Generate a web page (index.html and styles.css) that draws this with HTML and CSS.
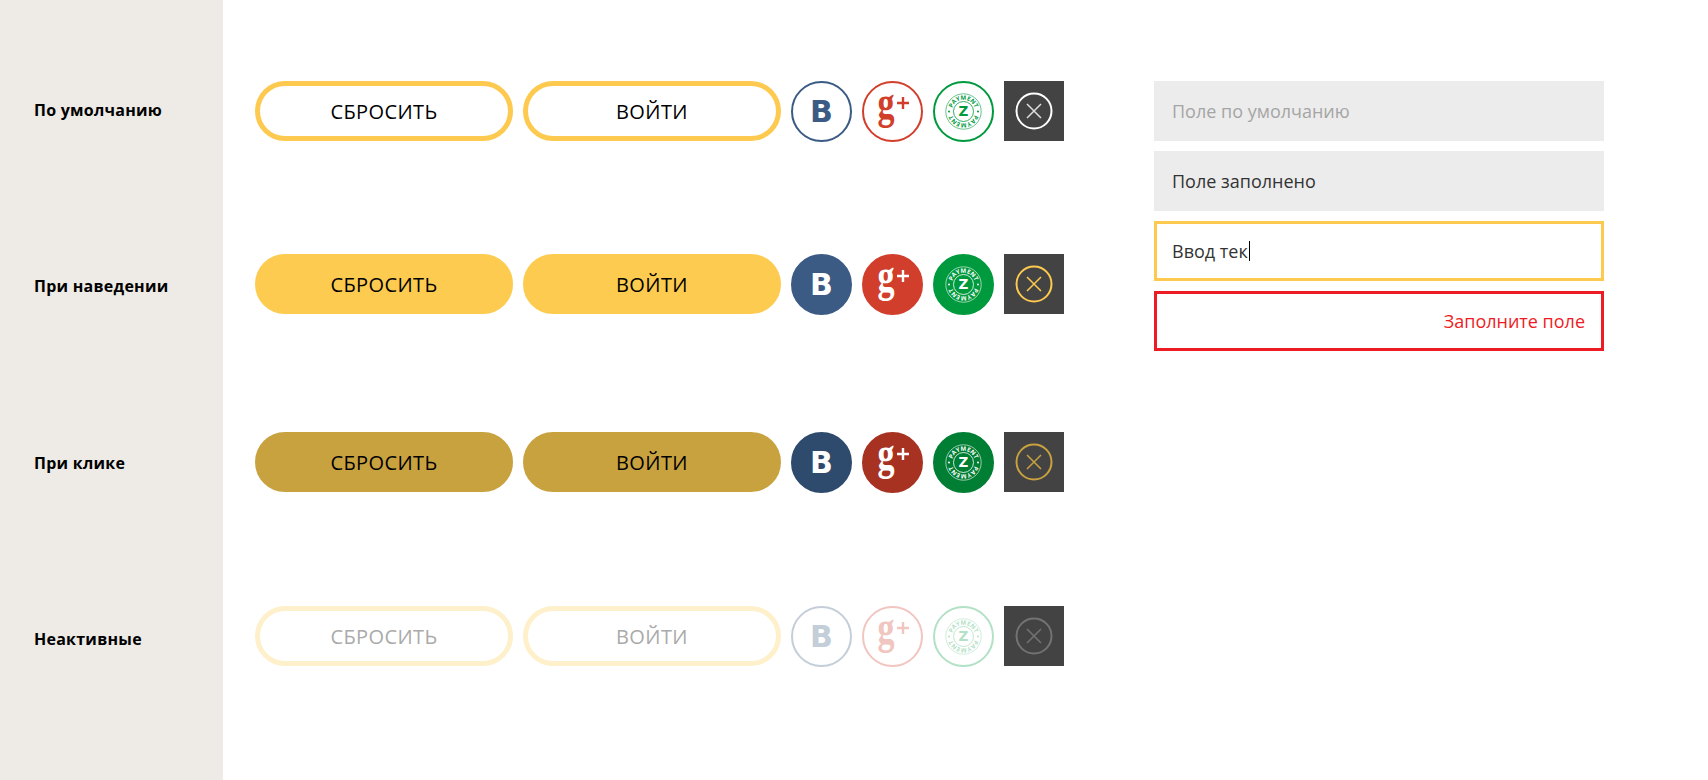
FILE: index.html
```html
<!DOCTYPE html>
<html lang="ru">
<head>
    <meta charset="UTF-8">
    <meta name="viewport" content="width=device-width, initial-scale=1.0">
    <title>Состояния элементов</title>
    <link rel="stylesheet" href="styles.css">
</head>
<body>

    <!-- Иконки -->
    <svg class="icon-defs" xmlns="http://www.w3.org/2000/svg">
        <defs>
            <path id="ring-top" d="M6.800 18.500a11.700 11.700 0 0 1 23.400 0"/>
            <symbol id="i-gplus" viewBox="0 0 61 61">
                <text class="glyph-g" transform="translate(15.500 37) scale(.74 1)">g</text>
                <path d="M41 16v12M35 22h12" fill="none" stroke="currentColor" stroke-width="2.400"/>
            </symbol>
            <symbol id="i-zpay" viewBox="0 0 37 37">
                <circle cx="18.500" cy="18.500" r="17.700" fill="none" stroke="currentColor" stroke-width=".6"/>
                <circle cx="18.500" cy="18.500" r="10" fill="none" stroke="currentColor" stroke-width=".8"/>
                <text class="glyph-ring"><textPath href="#ring-top" startOffset="50%" text-anchor="middle">PAYMENT</textPath></text>
                <g transform="rotate(180 18.500 18.500)">
                    <text class="glyph-ring"><textPath href="#ring-top" startOffset="50%" text-anchor="middle">PAYMENT</textPath></text>
                </g>
                <circle cx="4" cy="18.500" r="1" fill="currentColor"/>
                <circle cx="33" cy="18.500" r="1" fill="currentColor"/>
                <text class="glyph-z" x="18.500" y="23.400">Z</text>
            </symbol>
            <symbol id="i-close" viewBox="0 0 60 60">
                <circle class="close-ring" cx="30" cy="30" r="17.500" fill="none" stroke-width="2"/>
                <path class="close-x" d="M23 23l14 14M37 23l-14 14" fill="none" stroke-width="1.500"/>
            </symbol>
        </defs>
    </svg>

    <div class="page">
        <!-- Подписи состояний -->
        <div class="sidebar">
            <div class="state-label">По умолчанию</div>
            <div class="state-label state-label-wide">При наведении</div>
            <div class="state-label">При клике</div>
            <div class="state-label">Неактивные</div>
        </div>

        <div class="main">
            <div class="rows">
                <div class="row row-default">
                    <button class="btn">СБРОСИТЬ</button>
                    <button class="btn">ВОЙТИ</button>
                    <div class="soc soc-vk"><span class="glyph-b">B</span></div>
                    <div class="soc soc-g"><svg class="soc-icon"><use href="#i-gplus"/></svg></div>
                    <div class="soc soc-z"><svg class="z-icon"><use href="#i-zpay"/></svg></div>
                    <div class="close"><svg class="close-icon"><use href="#i-close"/></svg></div>
                </div>

                <div class="row row-hover">
                    <button class="btn">СБРОСИТЬ</button>
                    <button class="btn">ВОЙТИ</button>
                    <div class="soc soc-vk"><span class="glyph-b">B</span></div>
                    <div class="soc soc-g"><svg class="soc-icon"><use href="#i-gplus"/></svg></div>
                    <div class="soc soc-z"><svg class="z-icon"><use href="#i-zpay"/></svg></div>
                    <div class="close"><svg class="close-icon"><use href="#i-close"/></svg></div>
                </div>

                <div class="row row-active">
                    <button class="btn">СБРОСИТЬ</button>
                    <button class="btn">ВОЙТИ</button>
                    <div class="soc soc-vk"><span class="glyph-b">B</span></div>
                    <div class="soc soc-g"><svg class="soc-icon"><use href="#i-gplus"/></svg></div>
                    <div class="soc soc-z"><svg class="z-icon"><use href="#i-zpay"/></svg></div>
                    <div class="close"><svg class="close-icon"><use href="#i-close"/></svg></div>
                </div>

                <div class="row row-disabled">
                    <button class="btn" disabled>СБРОСИТЬ</button>
                    <button class="btn" disabled>ВОЙТИ</button>
                    <div class="soc soc-vk"><span class="glyph-b">B</span></div>
                    <div class="soc soc-g"><svg class="soc-icon"><use href="#i-gplus"/></svg></div>
                    <div class="soc soc-z"><svg class="z-icon"><use href="#i-zpay"/></svg></div>
                    <div class="close"><svg class="close-icon"><use href="#i-close"/></svg></div>
                </div>
            </div>

            <!-- Поля ввода -->
            <div class="fields">
                <div class="field field-empty">Поле по умолчанию</div>
                <div class="field">Поле заполнено</div>
                <div class="field field-focus">Ввод тек<span class="caret"></span></div>
                <div class="field field-error">Заполните поле</div>
            </div>
        </div>
    </div>

</body>
</html>
```

FILE: styles.css
```css
body {
    margin: 0;
    font-family: "Open Sans", Arial, sans-serif;
    background-color: #fff;
    color: #000;
}

.icon-defs {
    display: block;
    width: 0;
    height: 0;
}

.page {
    display: flex;
    min-height: 780px;
}

.sidebar {
    width: 189px;
    padding: 99px 0 0 34px;
    background-color: #eeebe6;
}

.state-label {
    height: 22px;
    margin-bottom: 154px;
    font-size: 16px;
    font-weight: 700;
    letter-spacing: .25px;
    line-height: 22px;
}

.state-label-wide {
    margin-bottom: 155px;
}

.main {
    display: flex;
    align-items: flex-start;
    padding: 81px 0 0 32px;
}

.row {
    display: flex;
    gap: 10px;
    height: 60px;
}

.row-hover {
    margin-top: 113px;
}

.row-active {
    margin-top: 118px;
}

.row-disabled {
    margin-top: 114px;
}

/* Кнопки */
.btn {
    box-sizing: border-box;
    width: 258px;
    height: 60px;
    padding: 0;
    border: 5px solid #fdc94f;
    border-radius: 30px;
    background-color: #fff;
    color: #000;
    font-family: inherit;
    font-size: 20px;
    font-weight: 500;
    letter-spacing: .4px;
    cursor: pointer;
}

.row-hover .btn {
    background-color: #fdcb4f;
    border-color: #fdcb4f;
}

.row-active .btn {
    background-color: #c9a240;
    border-color: #c9a240;
}

.row-disabled .btn {
    border-color: #fef0ca;
    color: #aaa;
}

/* Соцсети */
.soc {
    box-sizing: border-box;
    display: flex;
    align-items: center;
    justify-content: center;
    width: 61px;
    height: 61px;
    border: 2px solid currentColor;
    border-radius: 50%;
}

.soc-vk {
    color: #3b5b85;
}

.soc-g {
    color: #d13f2c;
}

.soc-z {
    color: #009a3e;
}

.soc-icon {
    flex: none;
    width: 61px;
    height: 61px;
}

.z-icon {
    width: 37px;
    height: 37px;
}

.glyph-b {
    font-family: "DejaVu Sans", sans-serif;
    font-size: 30px;
    font-weight: 700;
    line-height: 1;
}

.glyph-g {
    fill: currentColor;
    font-family: "Liberation Serif", serif;
    font-size: 46px;
    font-weight: 700;
}

.glyph-ring {
    fill: currentColor;
    font-family: "Open Sans", sans-serif;
    font-size: 6px;
    font-weight: 700;
    letter-spacing: .1px;
}

.glyph-z {
    fill: currentColor;
    font-family: "DejaVu Sans", sans-serif;
    font-size: 13.500px;
    font-weight: 700;
    text-anchor: middle;
}

.row-hover .soc,
.row-active .soc {
    background-color: currentColor;
}

.row-hover .soc > *,
.row-active .soc > * {
    color: #fff;
}

.row-active .soc-vk {
    color: #2e4a6d;
}

.row-active .soc-g {
    color: #a83222;
}

.row-active .soc-z {
    color: #007e33;
}

.row-disabled .soc-vk {
    color: #c4ced9;
}

.row-disabled .soc-g {
    color: #f1c5c0;
}

.row-disabled .soc-z {
    color: #b2e1c5;
}

/* Закрыть: цвет крестика идет переменной, иначе не дойдет внутрь use */
.close {
    --close-x: #ddd;
    width: 60px;
    height: 60px;
    background-color: #434343;
    color: #fff;
}

.close-icon {
    display: block;
    width: 60px;
    height: 60px;
}

.close-ring {
    stroke: currentColor;
}

.close-x {
    stroke: var(--close-x);
}

.row-hover .close {
    --close-x: #fdc94f;
    color: #fdc94f;
}

.row-active .close {
    --close-x: #c9a240;
    color: #c9a240;
}

.row-disabled .close {
    --close-x: #737373;
    color: #737373;
}

/* Поля */
.fields {
    display: flex;
    flex-direction: column;
    gap: 10px;
    margin-left: 90px;
}

.field {
    box-sizing: border-box;
    display: flex;
    align-items: center;
    width: 450px;
    height: 60px;
    padding: 0 18px;
    background-color: #ececec;
    color: #333;
    font-size: 18px;
}

.field-empty {
    color: #a5a5a5;
}

.field-focus {
    padding: 0 15px;
    border: 3px solid #fdc94f;
    background-color: #fff;
}

.field-error {
    justify-content: flex-end;
    padding: 0 16px;
    border: 3px solid #ed1c24;
    background-color: #fff;
    color: #ed1c24;
}

.caret {
    width: 1px;
    height: 20px;
    margin-left: 1px;
    background-color: #000;
}
```
